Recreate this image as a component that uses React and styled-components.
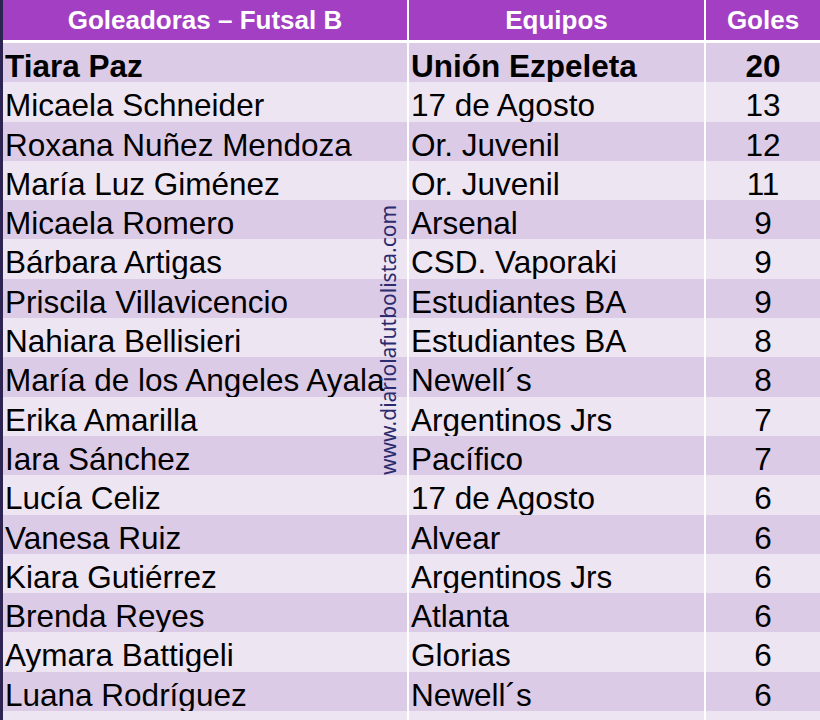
import React from "react"
import styled, { createGlobalStyle } from "styled-components"

const rows = [
  ["Tiara Paz", "Unión Ezpeleta", "20"],
  ["Micaela Schneider", "17 de Agosto", "13"],
  ["Roxana Nuñez Mendoza", "Or. Juvenil", "12"],
  ["María Luz Giménez", "Or. Juvenil", "11"],
  ["Micaela Romero", "Arsenal", "9"],
  ["Bárbara Artigas", "CSD. Vaporaki", "9"],
  ["Priscila Villavicencio", "Estudiantes BA", "9"],
  ["Nahiara Bellisieri", "Estudiantes BA", "8"],
  ["María de los Angeles Ayala", "Newell´s", "8"],
  ["Erika Amarilla", "Argentinos Jrs", "7"],
  ["Iara Sánchez", "Pacífico", "7"],
  ["Lucía Celiz", "17 de Agosto", "6"],
  ["Vanesa Ruiz", "Alvear", "6"],
  ["Kiara Gutiérrez", "Argentinos Jrs", "6"],
  ["Brenda Reyes", "Atlanta", "6"],
  ["Aymara Battigeli", "Glorias", "6"],
  ["Luana Rodríguez", "Newell´s", "6"],
  ["", "", ""],
]

const GlobalStyle = createGlobalStyle`
  body {
    margin: 0;
    background: #2d2452;
    font-family: "Liberation Sans", Arial, sans-serif;
  }
`

const App = () => {
  return (
    <>
      <GlobalStyle />
      <Page>
        <Table>
          <Header>
            <HeadCell>Goleadoras – Futsal B</HeadCell>
            <HeadCell>Equipos</HeadCell>
            <HeadCell>Goles</HeadCell>
          </Header>
          {rows.map((r, i) => (
            <Row key={i} $dark={i % 2 === 0} $bold={i === 0}>
              <Cell>{r[0]}</Cell>
              <Cell>{r[1]}</Cell>
              <Cell $center>{r[2]}</Cell>
            </Row>
          ))}
          <Watermark>www.diariolafutbolista.com</Watermark>
        </Table>
      </Page>
    </>
  )
}

const Page = styled.div`
  height: 720px;
  overflow: hidden;
  padding-left: 3px;
`

const Table = styled.div`
  position: relative;
  background: #ffffff;
  display: flex;
  flex-direction: column;
  gap: 2px;
`

const Header = styled.div`
  display: grid;
  grid-template-columns: 404px 295px 1fr;
  column-gap: 2px;
  height: 40px;
  margin-bottom: 1px;
`

const HeadCell = styled.div`
  background: #a23fc3;
  color: #ffffff;
  font-weight: 700;
  font-size: 26px;
  display: flex;
  align-items: center;
  justify-content: center;
`

const Row = styled.div`
  display: grid;
  grid-template-columns: 404px 295px 1fr;
  column-gap: 2px;
  height: 37.3px;
  font-weight: ${(p) => (p.$bold ? 700 : 400)};
  & > div {
    background: ${(p) => (p.$dark ? "#dccbe6" : "#eee5f2")};
  }
`

const Cell = styled.div`
  box-sizing: border-box;
  color: #000000;
  font-size: 31.5px;
  display: flex;
  align-items: center;
  justify-content: ${(p) => (p.$center ? "center" : "flex-start")};
  padding-left: ${(p) => (p.$center ? "0" : "2px")};
  padding-top: 5px;
  white-space: nowrap;
`

const Watermark = styled.span`
  position: absolute;
  left: 385px;
  top: 340px;
  transform: translate(-50%, -50%) rotate(-90deg);
  color: #2b2c6e;
  font-family: "Noto Sans", "Open Sans", sans-serif;
  font-size: 21px;
  white-space: nowrap;
`

export default App
